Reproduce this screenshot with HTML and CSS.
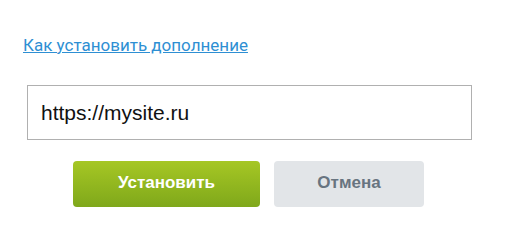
FILE: index.html
```html
<!DOCTYPE html>
<html lang="ru">
<head>
  <meta charset="UTF-8" />
  <title>Установка дополнения</title>
  <link rel="stylesheet" href="styles.css">
</head>
<body>
  <div class="page">
    <a class="help-link" href="#">Как установить дополнение</a>

    <div class="install-form">
      <input type="text" class="url-input" value="https://mysite.ru" />
      <div class="buttons">
        <button class="btn btn-install">Установить</button>
        <button class="btn btn-cancel">Отмена</button>
      </div>
    </div>
  </div>
</body>
</html>
```
FILE: styles.css
```css
* {
  box-sizing: border-box;
}

body {
  margin: 0;
  background: #fff;
  font-family: Arial, "Liberation Sans", sans-serif;
}

.page {
  padding: 35px 0 0 23px;
}

.help-link {
  display: inline-block;
  font-family: Roboto, "Liberation Sans", sans-serif;
  font-size: 17px;
  line-height: 20px;
  color: #2e8fd3;
  text-decoration: underline;
}

.install-form {
  width: 445px;
  margin: 30px 0 0 4px;
}

.url-input {
  display: block;
  width: 100%;
  height: 55px;
  padding: 0 13px;
  border: 1px solid #b0b0b0;
  border-radius: 0;
  font-family: Arial, "Liberation Sans", sans-serif;
  font-size: 21px;
  color: #111;
  outline: none;
}

.buttons {
  display: flex;
  justify-content: center;
  gap: 14px;
  margin-top: 21px;
  padding-right: 2px;
}

.btn {
  height: 46px;
  padding: 0 0 2px;
  border: none;
  border-radius: 4px;
  font-family: Arial, "Liberation Sans", sans-serif;
  font-size: 17px;
  font-weight: bold;
  cursor: pointer;
}

.btn-install {
  width: 187px;
  background: linear-gradient(#a6c724, #7fa81b);
  color: #fff;
}

.btn-cancel {
  width: 150px;
  background: #e2e5e8;
  color: #687480;
}
```
